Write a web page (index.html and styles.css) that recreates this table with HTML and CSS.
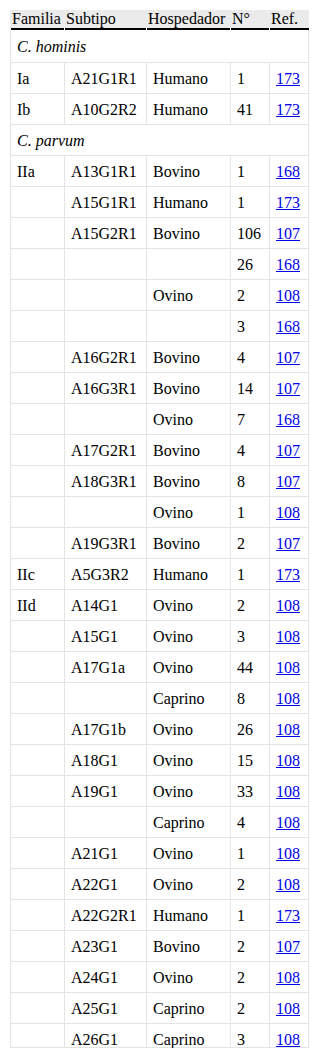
FILE: index.html
```html
<!DOCTYPE html>
<html lang="es">
<head>
<meta charset="utf-8">
<title>Subtipos</title>
<link rel="stylesheet" href="styles.css">
</head>
<body>
<div class="wrap">
<table class="tbl">
<thead>
<tr>
<th class="c1">Familia</th>
<th class="c2">Subtipo</th>
<th class="c3">Hospedador</th>
<th class="c4">N°</th>
<th class="c5">Ref.</th>
</tr>
</thead>
<tbody>
<tr class="group first"><td colspan="5"><i>C. hominis</i></td></tr>
<tr><td>Ia</td><td>A21G1R1</td><td>Humano</td><td>1</td><td><a href="#">173</a></td></tr>
<tr><td>Ib</td><td>A10G2R2</td><td>Humano</td><td>41</td><td><a href="#">173</a></td></tr>
<tr class="group"><td colspan="5"><i>C. parvum</i></td></tr>
<tr><td>IIa</td><td>A13G1R1</td><td>Bovino</td><td>1</td><td><a href="#">168</a></td></tr>
<tr><td></td><td>A15G1R1</td><td>Humano</td><td>1</td><td><a href="#">173</a></td></tr>
<tr><td></td><td>A15G2R1</td><td>Bovino</td><td>106</td><td><a href="#">107</a></td></tr>
<tr><td></td><td></td><td></td><td>26</td><td><a href="#">168</a></td></tr>
<tr><td></td><td></td><td>Ovino</td><td>2</td><td><a href="#">108</a></td></tr>
<tr><td></td><td></td><td></td><td>3</td><td><a href="#">168</a></td></tr>
<tr><td></td><td>A16G2R1</td><td>Bovino</td><td>4</td><td><a href="#">107</a></td></tr>
<tr><td></td><td>A16G3R1</td><td>Bovino</td><td>14</td><td><a href="#">107</a></td></tr>
<tr><td></td><td></td><td>Ovino</td><td>7</td><td><a href="#">168</a></td></tr>
<tr><td></td><td>A17G2R1</td><td>Bovino</td><td>4</td><td><a href="#">107</a></td></tr>
<tr><td></td><td>A18G3R1</td><td>Bovino</td><td>8</td><td><a href="#">107</a></td></tr>
<tr><td></td><td></td><td>Ovino</td><td>1</td><td><a href="#">108</a></td></tr>
<tr><td></td><td>A19G3R1</td><td>Bovino</td><td>2</td><td><a href="#">107</a></td></tr>
<tr><td>IIc</td><td>A5G3R2</td><td>Humano</td><td>1</td><td><a href="#">173</a></td></tr>
<tr><td>IId</td><td>A14G1</td><td>Ovino</td><td>2</td><td><a href="#">108</a></td></tr>
<tr><td></td><td>A15G1</td><td>Ovino</td><td>3</td><td><a href="#">108</a></td></tr>
<tr><td></td><td>A17G1a</td><td>Ovino</td><td>44</td><td><a href="#">108</a></td></tr>
<tr><td></td><td></td><td>Caprino</td><td>8</td><td><a href="#">108</a></td></tr>
<tr><td></td><td>A17G1b</td><td>Ovino</td><td>26</td><td><a href="#">108</a></td></tr>
<tr><td></td><td>A18G1</td><td>Ovino</td><td>15</td><td><a href="#">108</a></td></tr>
<tr><td></td><td>A19G1</td><td>Ovino</td><td>33</td><td><a href="#">108</a></td></tr>
<tr><td></td><td></td><td>Caprino</td><td>4</td><td><a href="#">108</a></td></tr>
<tr><td></td><td>A21G1</td><td>Ovino</td><td>1</td><td><a href="#">108</a></td></tr>
<tr><td></td><td>A22G1</td><td>Ovino</td><td>2</td><td><a href="#">108</a></td></tr>
<tr><td></td><td>A22G2R1</td><td>Humano</td><td>1</td><td><a href="#">173</a></td></tr>
<tr><td></td><td>A23G1</td><td>Bovino</td><td>2</td><td><a href="#">107</a></td></tr>
<tr><td></td><td>A24G1</td><td>Ovino</td><td>2</td><td><a href="#">108</a></td></tr>
<tr><td></td><td>A25G1</td><td>Caprino</td><td>2</td><td><a href="#">108</a></td></tr>
<tr class="last"><td></td><td>A26G1</td><td>Caprino</td><td>3</td><td><a href="#">108</a></td></tr>
</tbody>
</table>
</div>
</body>
</html>
```

FILE: styles.css
```css
* { box-sizing: border-box; }
html, body { margin: 0; padding: 0; background: #fff; }
body {
  font-family: "Liberation Serif", "Times New Roman", serif;
  font-size: 16px;
  color: #000;
}
.wrap { padding: 10px 0 0 10px; }
.tbl {
  border-collapse: separate;
  border-spacing: 0;
  table-layout: fixed;
  width: 299px;
}
.tbl th {
  font-weight: normal;
  text-align: left;
  padding: 0 2px 2px;
  line-height: 18px;
  height: 20px;
  white-space: nowrap;
  background:
    linear-gradient(#000, #000) right bottom / calc(100% - 1px) 2px no-repeat,
    linear-gradient(#fff, #fff) left bottom / 1px 2px no-repeat,
    #ebebeb;
}
.tbl .c1 { width: 54px; }
.tbl .c2 { width: 82px; }
.tbl .c3 { width: 84px; }
.tbl .c4 { width: 39px; }
.tbl .c5 { width: 40px; }
.tbl td {
  padding: 7px 6px 5px;
  line-height: 18px;
  border-left: 1px solid #e4e4e4;
  border-bottom: 1px solid #e4e4e4;
  white-space: nowrap;
  vertical-align: top;
}
.tbl td:last-child { border-right: 1px solid #e4e4e4; }
.tbl tr.first td { padding-top: 8px; padding-bottom: 6px; }
.tbl tr.last td { padding: 8px 6px 0; line-height: 15px; }
.tbl a { color: #0000ee; text-decoration: underline; }
```
